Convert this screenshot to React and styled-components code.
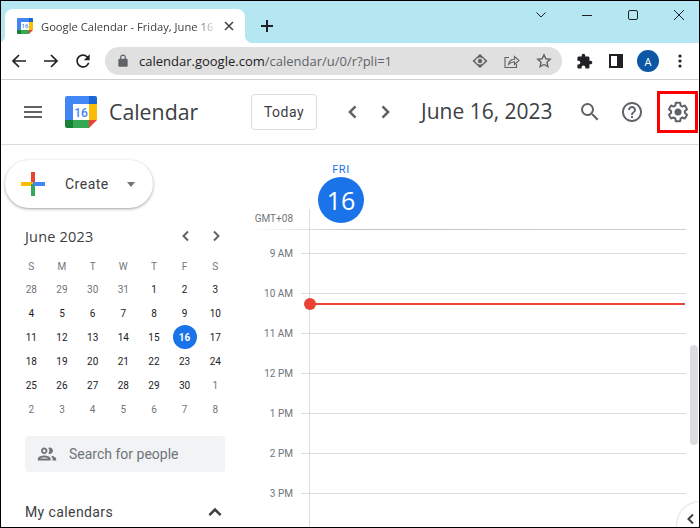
import React from 'react';
import styled, { createGlobalStyle } from 'styled-components';

const GlobalStyle = createGlobalStyle`
    html, body {
        margin: 0;
        padding: 0;
        background: #fff;
    }
    * {
        box-sizing: border-box;
    }
`;

const Window = styled.div`
    width: 700px;
    height: 528px;
    border: 1px solid #000;
    overflow: hidden;
    position: relative;
    display: flex;
    flex-direction: column;
    background: #fff;
    font-family: Roboto, sans-serif;
`;

const TabStrip = styled.div`
    height: 42px;
    flex-shrink: 0;
    display: flex;
    align-items: flex-end;
    padding-left: 4px;
    background: #b5e7f3;
`;

const Tab = styled.div`
    width: 240px;
    height: 34px;
    position: relative;
    display: flex;
    align-items: center;
    padding: 0 8px 0 12px;
    background: #fff;
    border-radius: 8px 8px 0 0;

    &::before, &::after {
        content: '';
        position: absolute;
        bottom: 0;
        width: 8px;
        height: 8px;
    }
    &::before {
        left: -8px;
        background: radial-gradient(circle at 0 0, transparent 8px, #fff 8.5px);
    }
    &::after {
        right: -8px;
        background: radial-gradient(circle at 100% 0, transparent 8px, #fff 8.5px);
    }
`;

const TabTitle = styled.span`
    flex: 1;
    margin-left: 8px;
    overflow: hidden;
    white-space: nowrap;
    font-family: "Open Sans", sans-serif;
    font-size: 11.2px;
    color: #3c4043;
    -webkit-mask-image: linear-gradient(to right, #000 88%, transparent 100%);
    mask-image: linear-gradient(to right, #000 88%, transparent 100%);
`;

const TabClose = styled.span`
    width: 16px;
    height: 16px;
    margin-left: 4px;
    display: flex;
    align-items: center;
    justify-content: center;
    color: #3c4043;
`;

const NewTab = styled.span`
    width: 28px;
    height: 34px;
    margin-left: 8px;
    display: flex;
    align-items: center;
    justify-content: center;
    color: #202124;
`;

const WindowControls = styled.div`
    margin-left: auto;
    margin-right: -3px;
    height: 100%;
    display: flex;
`;

const ControlButton = styled.span`
    width: 46px;
    height: 28px;
    display: flex;
    align-items: center;
    justify-content: center;
    color: #202124;
`;

const Toolbar = styled.div`
    height: 37px;
    flex-shrink: 0;
    display: flex;
    align-items: center;
    padding-left: 2px;
    border-bottom: 1px solid #d0d0d0;
`;

const ToolButton = styled.span`
    width: 32px;
    height: 32px;
    flex-shrink: 0;
    display: flex;
    align-items: center;
    justify-content: center;
    color: ${props => props.$color || '#202124'};
`;

const Omnibox = styled.div`
    width: 457px;
    height: 28px;
    margin: 0 6px;
    flex-shrink: 0;
    display: flex;
    align-items: center;
    padding-left: 10px;
    border-radius: 14px;
    background: #e0e0e0;
`;

const LockSlot = styled.span`
    width: 16px;
    height: 16px;
    flex-shrink: 0;
    display: flex;
    align-items: center;
    justify-content: center;
    color: #5f6368;
`;

const Url = styled.span`
    flex: 1;
    margin-left: 8px;
    white-space: nowrap;
    font-family: "Open Sans", sans-serif;
    font-size: 13px;
    color: #5f6368;

    b {
        font-weight: 400;
        color: #202124;
    }
`;

const OmniIcons = styled.div`
    display: flex;
    padding-right: 2px;
`;

const Avatar = styled.span`
    width: 22px;
    height: 22px;
    border-radius: 50%;
    display: flex;
    align-items: center;
    justify-content: center;
    background: #0b57a4;
    color: #fff;
    font-family: "Open Sans", sans-serif;
    font-size: 11px;
`;

const AppHeader = styled.header`
    height: 65px;
    flex-shrink: 0;
    display: flex;
    align-items: center;
    padding-left: 16px;
    border-bottom: 1px solid #dadce0;
`;

const HeaderIcon = styled.span`
    width: 32px;
    height: 32px;
    margin-left: ${props => props.$gap || 0}px;
    flex-shrink: 0;
    display: flex;
    align-items: center;
    justify-content: center;
    color: #5f6368;
`;

const Brand = styled.span`
    margin-left: 12px;
    padding-bottom: 2px;
    width: 142px;
    flex-shrink: 0;
    font-family: "Open Sans", sans-serif;
    font-size: 21.3px;
    color: #3c4043;
`;

const TodayButton = styled.span`
    width: 66px;
    height: 36px;
    flex-shrink: 0;
    display: flex;
    align-items: center;
    justify-content: center;
    border: 1px solid #dadce0;
    border-radius: 4px;
    font-size: 14px;
    letter-spacing: 0.5px;
    color: #3c4043;
`;

const DateTitle = styled.span`
    width: 153px;
    margin-left: 20px;
    padding-bottom: 2px;
    flex-shrink: 0;
    white-space: nowrap;
    font-family: "Open Sans", sans-serif;
    font-size: 21px;
    color: #3c4043;
`;

const SettingsFrame = styled.span`
    width: 41px;
    height: 42px;
    margin-left: 9px;
    flex-shrink: 0;
    display: flex;
    align-items: center;
    justify-content: center;
    border: 3px solid #f00;
    color: #5f6368;
`;

const Body = styled.div`
    flex: 1;
    min-height: 0;
    display: flex;
    position: relative;
`;

const Sidebar = styled.aside`
    width: 245px;
    flex-shrink: 0;
    padding-top: 15px;
`;

const CreateButton = styled.div`
    width: 148px;
    height: 48px;
    margin-left: 4px;
    display: flex;
    align-items: center;
    padding-left: 16px;
    border-radius: 24px;
    background: #fff;
    box-shadow: 0 1px 2px 0 rgba(60, 64, 67, 0.3), 0 1px 3px 1px rgba(60, 64, 67, 0.15);
`;

const CreateLabel = styled.span`
    margin-left: 20px;
    font-size: 14px;
    letter-spacing: 0.5px;
    color: #3c4043;
`;

const CreateCaret = styled.span`
    margin-left: 18px;
    border-top: 5px solid #70757a;
    border-left: 4px solid transparent;
    border-right: 4px solid transparent;
`;

const MiniHeader = styled.div`
    height: 20px;
    margin: 18px 0 0 24px;
    display: flex;
    align-items: center;
    font-family: "Open Sans", sans-serif;
    font-size: 14.5px;
    letter-spacing: 0.2px;
    color: #3c4043;
`;

const MiniNav = styled.div`
    margin-left: auto;
    width: 46px;
    margin-right: 22px;
    display: flex;
    justify-content: space-between;
    color: #5f6368;
`;

const MiniGrid = styled.div`
    margin: 10px 0 0 15px;
    display: grid;
    grid-template-columns: repeat(7, 30.67px);
    grid-template-rows: 21px;
    grid-auto-rows: 24px;
`;

const WeekDay = styled.span`
    display: flex;
    align-items: center;
    justify-content: center;
    font-size: 10px;
    font-weight: 400;
    color: #70757a;
`;

const DayCell = styled.span`
    display: flex;
    align-items: center;
    justify-content: center;
    font-size: 10px;
    font-weight: ${props => (props.$today ? 700 : 400)};
    color: ${props => (props.$muted ? '#70757a' : '#202124')};

    ${props => props.$today && `
        color: #fff;
        background: #1a73e8;
        border-radius: 50%;
        width: 24px;
        height: 24px;
        justify-self: center;
    `}
`;

const PeopleSearch = styled.div`
    width: 200px;
    height: 36px;
    margin: 15px 0 0 24px;
    display: flex;
    align-items: center;
    padding-left: 11px;
    border-radius: 4px;
    background: #f1f3f4;
    color: #70757a;
`;

const PeopleText = styled.span`
    margin-left: 11px;
    font-size: 14px;
`;

const SectionHead = styled.div`
    margin: 30px 0 0 24px;
    width: 200px;
    display: flex;
    align-items: center;
    justify-content: space-between;
    font-size: 14px;
    letter-spacing: 0.4px;
    color: #3c4043;
`;

const Main = styled.main`
    flex: 1;
    min-width: 0;
    padding-right: 13px;
`;

const DayHead = styled.div`
    height: 64px;
    margin-left: 72px;
    width: 46px;
    padding-top: 18px;
    display: flex;
    flex-direction: column;
    align-items: center;
`;

const DayName = styled.span`
    height: 16px;
    font-size: 11px;
    line-height: 14px;
    letter-spacing: 0.6px;
    color: #1a73e8;
`;

const DayNumber = styled.span`
    width: 46px;
    height: 46px;
    flex-shrink: 0;
    display: flex;
    align-items: center;
    justify-content: center;
    border-radius: 50%;
    background: #1a73e8;
    font-family: "Open Sans", sans-serif;
    font-size: 25px;
    color: #fff;
`;

const ZoneRow = styled.div`
    height: 21px;
    display: flex;
    border-bottom: 1px solid;
    border-image: linear-gradient(to right, transparent 1%, #c4c4c4 25%, #d0d0d0 100%) 1;
`;

const Gutter = styled.span`
    width: 47px;
    flex-shrink: 0;
    text-align: right;
    font-size: 10px;
    color: #70757a;
`;

const ZoneLabel = styled(Gutter)`
    line-height: 20px;
`;

const SlotColumn = styled.div`
    flex: 1;
    position: relative;
    border-left: 1px solid #dadce0;
`;

const ZoneColumn = styled(SlotColumn)`
    margin-left: 16px;
`;

const Spacer = styled.div`
    height: 23px;
    margin-left: 63px;
    border-left: 1px solid #dadce0;
`;

const HourRow = styled.div`
    height: 40px;
    display: flex;
`;

const HourLabel = styled(Gutter)`
    height: 14px;
    margin-top: -6px;
    line-height: 14px;
`;

const Tick = styled.span`
    width: 8px;
    margin-left: 8px;
    flex-shrink: 0;
    border-top: 1px solid #dadce0;
`;

const HourSlot = styled(SlotColumn)`
    border-top: 1px solid #dadce0;
`;

const NowMarker = styled.div`
    position: absolute;
    top: 9px;
    left: 0;
    right: 1px;
    height: 2px;
    background: #ea4335;

    &::before {
        content: '';
        position: absolute;
        left: -6px;
        top: -5px;
        width: 12px;
        height: 12px;
        border-radius: 50%;
        background: #ea4335;
    }
`;

const ScrollThumb = styled.div`
    position: absolute;
    right: 1px;
    top: 200px;
    width: 8px;
    height: 100px;
    border-radius: 4px;
    background: #dadce0;
`;

const SidePanelToggle = styled.div`
    position: absolute;
    right: -24px;
    bottom: -21px;
    width: 46px;
    height: 46px;
    padding: 9px 0 0 6px;
    border-radius: 50%;
    background: #fff;
    box-shadow: 0 0 2px rgba(60, 64, 67, 0.4);
    color: #3c4043;
`;

const Chevron = ({ dir = 'right', size = 16, width = 2 }) => {
    const points = {
        left: '10,3.5 5.5,8 10,12.5',
        right: '6,3.5 10.5,8 6,12.5',
        up: '3.5,10.5 8,6 12.5,10.5',
    };
    return (
        <svg width={size} height={size} viewBox="0 0 16 16" fill="none" stroke="currentColor" strokeWidth={width}>
            <polyline points={points[dir]} />
        </svg>
    );
};

const Icon = ({ size = 24, d, children }) => (
    <svg width={size} height={size} viewBox="0 0 24 24" fill="currentColor">
        {d && <path d={d} />}
        {children}
    </svg>
);

const CalendarLogo = ({ size }) => (
    <svg width={size} height={size} viewBox="0 0 32 32">
        <path d="M2 0h22v8H8v16H0V2a2 2 0 0 1 2-2z" fill="#4285f4" />
        <path d="M24 0h6a2 2 0 0 1 2 2v6h-8z" fill="#1967d2" />
        <rect x="24" y="8" width="8" height="16" fill="#fbbc04" />
        <rect x="8" y="24" width="16" height="8" fill="#34a853" />
        <path d="M0 24h8v8H2a2 2 0 0 1-2-2z" fill="#188038" />
        <path d="M24 24h8l-8 8z" fill="#ea4335" />
        <rect x="8" y="8" width="16" height="16" fill="#fff" />
        <text x="16" y="20.5" textAnchor="middle" fontFamily="Roboto, sans-serif" fontSize="12" fontWeight="500" fill="#4285f4">16</text>
    </svg>
);

const CreatePlus = () => (
    <svg width="24" height="24" viewBox="0 0 24 24">
        <rect x="10" y="0" width="4" height="12" fill="#ea4335" />
        <rect x="0" y="10" width="12" height="4" fill="#fbbc04" />
        <rect x="10" y="12" width="4" height="12" fill="#34a853" />
        <rect x="12" y="10" width="12" height="4" fill="#4285f4" />
    </svg>
);

const weekDays = ['S', 'M', 'T', 'W', 'T', 'F', 'S'];

const days = [
    [28, 1], [29, 1], [30, 1], [31, 1], [1], [2], [3],
    [4], [5], [6], [7], [8], [9], [10],
    [11], [12], [13], [14], [15], [16], [17],
    [18], [19], [20], [21], [22], [23], [24],
    [25], [26], [27], [28], [29], [30], [1, 1],
    [2, 1], [3, 1], [4, 1], [5, 1], [6, 1], [7, 1], [8, 1],
];

const hours = ['9 AM', '10 AM', '11 AM', '12 PM', '1 PM', '2 PM', '3 PM'];

const GEAR = 'M13.85 22.25h-3.7c-.74 0-1.36-.54-1.45-1.27l-.27-1.89c-.27-.14-.53-.29-.79-.46l-1.8.72c-.7.26-1.47-.03-1.81-.65L2.2 15.53c-.35-.66-.2-1.44.36-1.88l1.53-1.19c-.01-.15-.02-.3-.02-.46 0-.15.01-.31.02-.46l-1.52-1.19c-.59-.45-.74-1.26-.37-1.88l1.85-3.19c.34-.62 1.11-.9 1.79-.63l1.81.73c.26-.17.52-.32.78-.46l.27-1.91c.09-.7.71-1.25 1.44-1.25h3.7c.74 0 1.36.54 1.45 1.27l.27 1.89c.27.14.53.29.79.46l1.8-.72c.71-.26 1.48.03 1.82.65l1.84 3.18c.36.66.2 1.44-.36 1.88l-1.52 1.19c.01.15.02.3.02.46s-.01.31-.02.46l1.52 1.19c.56.45.72 1.23.37 1.86l-1.86 3.22c-.34.62-1.11.9-1.8.63l-1.8-.72c-.26.17-.52.32-.78.46l-.27 1.91c-.1.68-.72 1.22-1.46 1.22zm-3.23-2h2.76l.37-2.55.53-.22c.44-.18.88-.44 1.34-.78l.45-.34 2.38.96 1.38-2.4-2.03-1.58.07-.56c.03-.26.06-.51.06-.78s-.03-.53-.06-.78l-.07-.56 2.03-1.58-1.39-2.4-2.39.96-.45-.35c-.42-.32-.87-.58-1.33-.77l-.52-.22-.37-2.55h-2.76l-.37 2.55-.53.21c-.44.19-.88.44-1.34.79l-.45.33-2.38-.95-1.39 2.39 2.03 1.58-.07.56a7 7 0 0 0-.06.79c0 .26.02.53.06.78l.07.56-2.03 1.58 1.38 2.4 2.39-.96.45.35c.43.33.86.58 1.33.77l.53.22.38 2.55z';
const SEARCH = 'M15.5 14h-.79l-.28-.27A6.471 6.471 0 0 0 16 9.5 6.5 6.5 0 1 0 9.5 16c1.61 0 3.09-.59 4.23-1.57l.27.28v.79l5 4.99L20.49 19l-4.99-5zm-6 0C7.01 14 5 11.99 5 9.5S7.01 5 9.5 5 14 7.01 14 9.5 11.99 14 9.5 14z';
const HELP = 'M11 18h2v-2h-2v2zm1-16C6.48 2 2 6.48 2 12s4.48 10 10 10 10-4.48 10-10S17.52 2 12 2zm0 18c-4.41 0-8-3.59-8-8s3.59-8 8-8 8 3.59 8 8-3.59 8-8 8zm0-14c-2.21 0-4 1.79-4 4h2c0-1.1.9-2 2-2s2 .9 2 2c0 2-3 1.75-3 5h2c0-2.25 3-2.5 3-5 0-2.21-1.79-4-4-4z';
const MENU = 'M3 18h18v-2H3v2zm0-5h18v-2H3v2zm0-7v2h18V6H3z';
const PEOPLE = 'M9 13.75c-2.34 0-7 1.17-7 3.5V19h14v-1.75c0-2.33-4.66-3.5-7-3.5zM4.34 17c.84-.58 2.87-1.25 4.66-1.25s3.82.67 4.66 1.25H4.34zM9 12c1.93 0 3.5-1.57 3.5-3.5S10.93 5 9 5 5.5 6.57 5.5 8.5 7.07 12 9 12zm0-5c.83 0 1.5.67 1.5 1.5S9.83 10 9 10s-1.5-.67-1.5-1.5S8.17 7 9 7zm7.04 6.81c1.16.84 1.96 1.96 1.96 3.44V19h4v-1.75c0-2.02-3.5-3.17-5.96-3.44zM15 12c1.93 0 3.5-1.57 3.5-3.5S16.93 5 15 5c-.54 0-1.04.13-1.5.35.63.89 1 1.98 1 3.15s-.37 2.26-1 3.15c.46.22.96.35 1.5.35z';
const REFRESH = 'M17.65 6.35A7.958 7.958 0 0 0 12 4c-4.42 0-7.99 3.58-7.99 8s3.57 8 7.99 8c3.73 0 6.84-2.55 7.73-6h-2.08A5.99 5.99 0 0 1 12 18c-3.31 0-6-2.69-6-6s2.69-6 6-6c1.66 0 3.14.69 4.22 1.78L13 11h7V4l-2.35 2.35z';
const LOCK = 'M18 8h-1V6c0-2.76-2.24-5-5-5S7 3.24 7 6v2H6c-1.1 0-2 .9-2 2v10c0 1.1.9 2 2 2h12c1.1 0 2-.9 2-2V10c0-1.1-.9-2-2-2zM9 6c0-1.66 1.34-3 3-3s3 1.34 3 3v2H9V6z';
const PUZZLE = 'M20.5 11H19V7c0-1.1-.9-2-2-2h-4V3.5C13 2.12 11.88 1 10.5 1S8 2.12 8 3.5V5H4c-1.1 0-1.99.9-1.99 2v3.8H3.5c1.49 0 2.7 1.21 2.7 2.7s-1.21 2.7-2.7 2.7H2V20c0 1.1.9 2 2 2h3.8v-1.5c0-1.49 1.21-2.7 2.7-2.7 1.49 0 2.7 1.21 2.7 2.7V22H17c1.1 0 2-.9 2-2v-4h1.5c1.38 0 2.5-1.12 2.5-2.5S21.88 11 20.5 11z';

const App = () => (
    <>
        <GlobalStyle />
        <Window>
            <TabStrip>
                <Tab>
                    <CalendarLogo size={16} />
                    <TabTitle>Google Calendar - Friday, June 16</TabTitle>
                    <TabClose>
                        <svg width="10" height="10" viewBox="0 0 10 10" stroke="currentColor" strokeWidth="1.5">
                            <path d="M1 1l8 8M9 1l-8 8" />
                        </svg>
                    </TabClose>
                </Tab>
                <NewTab>
                    <svg width="14" height="14" viewBox="0 0 14 14" stroke="currentColor" strokeWidth="2">
                        <path d="M7 1v12M1 7h12" />
                    </svg>
                </NewTab>
                <WindowControls>
                    <ControlButton>
                        <svg width="12" height="12" viewBox="0 0 12 12" fill="none" stroke="currentColor">
                            <path d="M1.5 3.5L6 8l4.5-4.5" />
                        </svg>
                    </ControlButton>
                    <ControlButton>
                        <svg width="12" height="12" viewBox="0 0 12 12" stroke="currentColor">
                            <path d="M1 6.5h10" />
                        </svg>
                    </ControlButton>
                    <ControlButton>
                        <svg width="12" height="12" viewBox="0 0 12 12" fill="none" stroke="currentColor">
                            <rect x="1.5" y="1.5" width="9" height="9" rx="1.5" />
                        </svg>
                    </ControlButton>
                    <ControlButton>
                        <svg width="12" height="12" viewBox="0 0 12 12" stroke="currentColor">
                            <path d="M1 1l10 10M11 1L1 11" />
                        </svg>
                    </ControlButton>
                </WindowControls>
            </TabStrip>

            <Toolbar>
                <ToolButton>
                    <svg width="16" height="16" viewBox="0 0 16 16" fill="none" stroke="currentColor" strokeWidth="1.7">
                        <path d="M15 8H2M8 2L2 8l6 6" />
                    </svg>
                </ToolButton>
                <ToolButton>
                    <svg width="16" height="16" viewBox="0 0 16 16" fill="none" stroke="currentColor" strokeWidth="1.7">
                        <path d="M1 8h13M8 2l6 6-6 6" />
                    </svg>
                </ToolButton>
                <ToolButton>
                    <Icon size={20} d={REFRESH} />
                </ToolButton>
                <Omnibox>
                    <LockSlot>
                        <Icon size={14} d={LOCK} />
                    </LockSlot>
                    <Url><b>calendar.google.com</b>/calendar/u/0/r?pli=1</Url>
                    <OmniIcons>
                        <ToolButton $color="#5f6368">
                            <svg width="16" height="14" viewBox="0 0 16 14" fill="currentColor">
                                <path fillRule="evenodd" d="M8 0l7.500 7L8 14 .5 7zM8 3.500C5.800 3.500 4 5.200 3 7c1 1.800 2.800 3.500 5 3.500s4-1.700 5-3.500c-1-1.800-2.800-3.500-5-3.500z" />
                                <circle cx="8" cy="7" r="2.200" />
                            </svg>
                        </ToolButton>
                        <ToolButton $color="#5f6368">
                            <svg width="16" height="16" viewBox="0 0 16 16" fill="none" stroke="currentColor" strokeWidth="1.1">
                                <path d="M5 4.500H1v10h11.500V11" />
                                <path d="M4.500 11.500C5 8 7.500 6.300 10.500 6.300V3.500L15 7.500l-4.500 4V8.800C8 8.800 6 9.700 4.500 11.500z" />
                            </svg>
                        </ToolButton>
                        <ToolButton $color="#5f6368">
                            <svg width="16" height="16" viewBox="0 0 16 16" fill="none" stroke="currentColor" strokeWidth="1.4">
                                <path d="M8 1.800l1.900 4 4.300.5-3.200 3 .9 4.300L8 11.500l-3.900 2.100.9-4.300-3.200-3 4.300-.5z" />
                            </svg>
                        </ToolButton>
                    </OmniIcons>
                </Omnibox>
                <ToolButton>
                    <Icon size={17} d={PUZZLE} />
                </ToolButton>
                <ToolButton>
                    <svg width="14" height="14" viewBox="0 0 14 14">
                        <path fillRule="evenodd" d="M0 0h14v14H0zM2 2v10h6V2z" fill="currentColor" />
                    </svg>
                </ToolButton>
                <ToolButton>
                    <Avatar>A</Avatar>
                </ToolButton>
                <ToolButton>
                    <svg width="4" height="16" viewBox="0 0 4 16" fill="currentColor">
                        <circle cx="2" cy="3" r="1.600" />
                        <circle cx="2" cy="8" r="1.600" />
                        <circle cx="2" cy="13" r="1.600" />
                    </svg>
                </ToolButton>
            </Toolbar>

            <AppHeader>
                <HeaderIcon>
                    <Icon d={MENU} />
                </HeaderIcon>
                <HeaderIcon $gap={16}>
                    <CalendarLogo size={32} />
                </HeaderIcon>
                <Brand>Calendar</Brand>
                <TodayButton>Today</TodayButton>
                <HeaderIcon $gap={20}>
                    <Chevron dir="left" size={20} width={2} />
                </HeaderIcon>
                <HeaderIcon>
                    <Chevron dir="right" size={20} width={2} />
                </HeaderIcon>
                <DateTitle>June 16, 2023</DateTitle>
                <HeaderIcon>
                    <Icon d={SEARCH} />
                </HeaderIcon>
                <HeaderIcon $gap={10}>
                    <Icon d={HELP} />
                </HeaderIcon>
                <SettingsFrame>
                    <Icon d={GEAR}>
                        <circle cx="12" cy="12" r="3.500" />
                    </Icon>
                </SettingsFrame>
            </AppHeader>

            <Body>
                <Sidebar>
                    <CreateButton>
                        <CreatePlus />
                        <CreateLabel>Create</CreateLabel>
                        <CreateCaret />
                    </CreateButton>
                    <MiniHeader>
                        June 2023
                        <MiniNav>
                            <Chevron dir="left" />
                            <Chevron dir="right" />
                        </MiniNav>
                    </MiniHeader>
                    <MiniGrid>
                        {weekDays.map((day, i) => <WeekDay key={i}>{day}</WeekDay>)}
                        {days.map(([day, muted], i) => (
                            <DayCell key={i} $muted={muted} $today={i === 19}>{day}</DayCell>
                        ))}
                    </MiniGrid>
                    <PeopleSearch>
                        <Icon size={22} d={PEOPLE} />
                        <PeopleText>Search for people</PeopleText>
                    </PeopleSearch>
                    <SectionHead>
                        My calendars
                        <Chevron dir="up" size={20} />
                    </SectionHead>
                </Sidebar>
                <Main>
                    <DayHead>
                        <DayName>FRI</DayName>
                        <DayNumber>16</DayNumber>
                    </DayHead>
                    <ZoneRow>
                        <ZoneLabel>GMT+08</ZoneLabel>
                        <ZoneColumn />
                    </ZoneRow>
                    <Spacer />
                    {hours.map(hour => (
                        <HourRow key={hour}>
                            <HourLabel>{hour}</HourLabel>
                            <Tick />
                            <HourSlot>
                                {hour === '10 AM' && <NowMarker />}
                            </HourSlot>
                        </HourRow>
                    ))}
                </Main>
                <ScrollThumb />
                <SidePanelToggle>
                    <Chevron dir="left" />
                </SidePanelToggle>
            </Body>
        </Window>
    </>
);

export default App;
